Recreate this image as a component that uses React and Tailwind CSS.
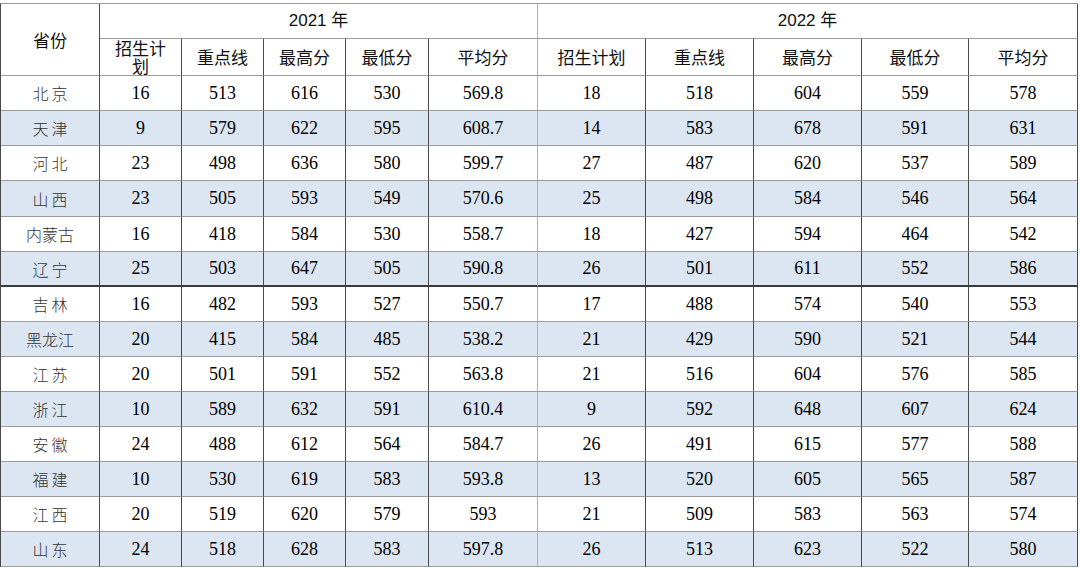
const rows = [
  ['北京', 16, 513, 616, 530, '569.8', 18, 518, 604, 559, 578],
  ['天津', 9, 579, 622, 595, '608.7', 14, 583, 678, 591, 631],
  ['河北', 23, 498, 636, 580, '599.7', 27, 487, 620, 537, 589],
  ['山西', 23, 505, 593, 549, '570.6', 25, 498, 584, 546, 564],
  ['内蒙古', 16, 418, 584, 530, '558.7', 18, 427, 594, 464, 542],
  ['辽宁', 25, 503, 647, 505, '590.8', 26, 501, 611, 552, 586],
  ['吉林', 16, 482, 593, 527, '550.7', 17, 488, 574, 540, 553],
  ['黑龙江', 20, 415, 584, 485, '538.2', 21, 429, 590, 521, 544],
  ['江苏', 20, 501, 591, 552, '563.8', 21, 516, 604, 576, 585],
  ['浙江', 10, 589, 632, 591, '610.4', 9, 592, 648, 607, 624],
  ['安徽', 24, 488, 612, 564, '584.7', 26, 491, 615, 577, 588],
  ['福建', 10, 530, 619, 583, '593.8', 13, 520, 605, 565, 587],
  ['江西', 20, 519, 620, 579, '593', 21, 509, 583, 563, 574],
  ['山东', 24, 518, 628, 583, '597.8', 26, 513, 623, 522, 580],
]

const cols = ['w-[99px]', 'w-[82px]', 'w-[82px]', 'w-[82px]', 'w-[83px]', 'w-[109px]', 'w-[108px]', 'w-[108px]', 'w-[108px]', 'w-[107px]', 'w-[109px]']
const subHeads = ['招生计\n划', '重点线', '最高分', '最低分', '平均分', '招生计划', '重点线', '最高分', '最低分', '平均分']

export default function App() {
  return (
    <div className="bg-white w-[1080px] h-[572px] overflow-hidden pt-[3px]">
      <table className="table-fixed border-separate border-spacing-0 border-l border-t border-l-[#4a4a4a] border-t-[#9a9a9a] w-[1078px] text-[#111]">
        <colgroup>
          {cols.map((w, i) => <col key={i} className={w} />)}
        </colgroup>
        <thead className="font-['Noto_Sans_CJK_SC','Noto_Sans',sans-serif]">
          <tr>
            <th rowSpan={2} className="font-normal text-[17px] border-r border-b border-r-[#4a4a4a] border-b-[#9a9a9a] align-middle">省份</th>
            <th colSpan={5} className="h-[35px] font-normal text-[17px] border-r border-b border-r-[#b0b0b0] border-b-[#9a9a9a] align-middle font-['Liberation_Sans','Noto_Sans_CJK_SC',sans-serif]">2021 年</th>
            <th colSpan={5} className="h-[35px] font-normal text-[17px] border-r border-b border-r-[#4a4a4a] border-b-[#9a9a9a] align-middle font-['Liberation_Sans','Noto_Sans_CJK_SC',sans-serif]">2022 年</th>
          </tr>
          <tr>
            {subHeads.map((h, i) => (
              <th
                key={i}
                className={`h-[37px] font-normal text-[17px] leading-[18px] whitespace-pre-line border-r border-b border-b-[#9a9a9a] align-middle ${i === 4 ? 'border-r-[#b0b0b0]' : 'border-r-[#4a4a4a]'}`}
              >
                {h}
              </th>
            ))}
          </tr>
        </thead>
        <tbody>
          {rows.map((r, ri) => {
            const blue = ri % 2 === 1
            const h = ri === 3 ? 'h-[36px]' : 'h-[35px]'
            const bottom = ri === 5 ? 'border-b-2 border-b-[#3a3a3a]' : 'border-b border-b-[#9a9a9a]'
            return (
              <tr key={ri} className={blue ? 'bg-[#dce6f2]' : 'bg-white'}>
                {r.map((c, ci) => (
                  <td
                    key={ci}
                    className={`${h} ${bottom} border-r text-center align-middle ${ci === 5 ? 'border-r-[#b0b0b0]' : 'border-r-[#4a4a4a]'} ${
                      ci === 0
                        ? "text-[16px] font-light text-[#333] font-['Noto_Sans_CJK_SC','Noto_Sans',sans-serif]"
                        : "text-[18px] text-black font-['Liberation_Serif','Times_New_Roman',serif]"
                    } ${ci === 0 && String(c).length === 2 ? 'tracking-[3px] pl-[3px]' : ''}`}
                  >
                    {c}
                  </td>
                ))}
              </tr>
            )
          })}
        </tbody>
      </table>
    </div>
  )
}
